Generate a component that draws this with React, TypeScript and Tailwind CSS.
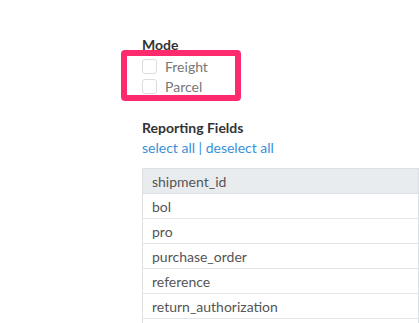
const fields = [
  "bol",
  "pro",
  "purchase_order",
  "reference",
  "return_authorization",
  "",
];

function Checkbox({ label }: { label: string }) {
  return (
    <label className="flex items-center gap-[8px] h-[20px]">
      <span className="w-[15px] h-[15px] rounded-[3px] border border-[#dcdcdc] bg-white" />
      <span className="text-[14px] text-[#777]">{label}</span>
    </label>
  );
}

export default function App() {
  return (
    <div
      className="w-[419px] h-[323px] overflow-hidden bg-white pl-[142px] pt-[36px]"
      style={{ fontFamily: "Lato, 'Open Sans', sans-serif" }}
    >
      <div className="text-[14px] font-bold text-[#333] leading-[17px]">Mode</div>
      <div className="relative mt-[3px]">
        <div className="absolute left-[-21px] top-[-6px] w-[120px] h-[51px] border-[6px] border-[#fd2b6d] rounded-[4px]" />
        <Checkbox label="Freight" />
        <Checkbox label="Parcel" />
      </div>
      <div className="mt-[23px] text-[14px] font-bold text-[#333] leading-[17px]">
        Reporting Fields
      </div>
      <div className="text-[14px] text-[#3a8fd9] leading-[18px] mt-[3px]">
        select all | deselect all
      </div>
      <div className="mt-[11px] border border-[#dcdfe3] text-[14px] text-[#555]">
        <div className="h-[25px] bg-[#e9ecef] flex items-center px-[9px] border-b border-[#dcdfe3]">
          shipment_id
        </div>
        {fields.map((f, i) => (
          <div
            key={i}
            className="h-[25px] flex items-center px-[9px] border-b border-[#e3e5e8]"
          >
            {f}
          </div>
        ))}
      </div>
    </div>
  );
}
